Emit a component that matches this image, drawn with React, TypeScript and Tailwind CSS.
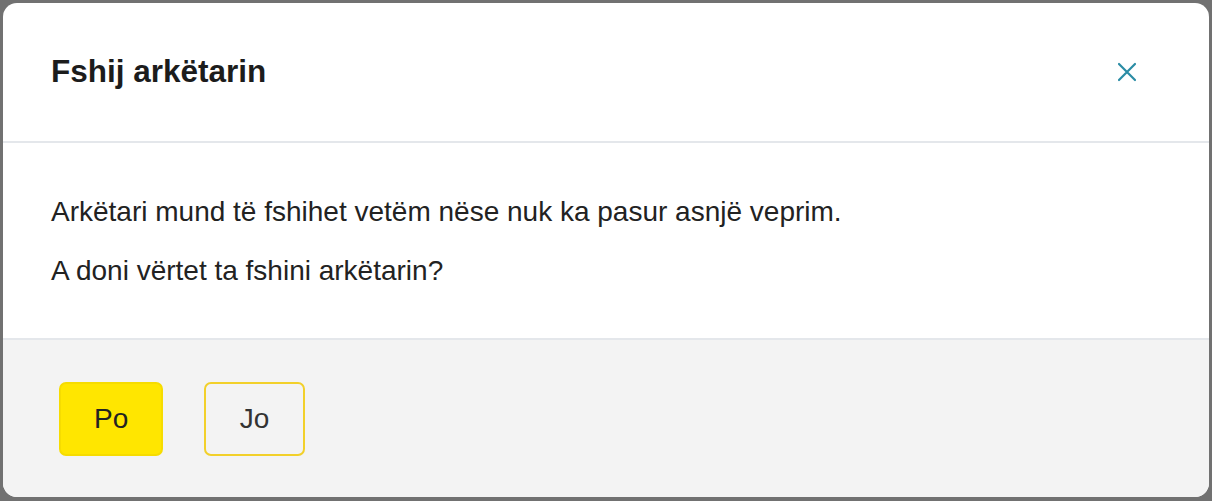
export default function App() {
  return (
    <div className="h-[501px] w-[1212px] bg-[#717171] p-[3px] font-['Liberation_Sans',Arial,sans-serif]">
      <div className="flex h-[494px] w-[1206px] flex-col overflow-hidden rounded-[14px] bg-white">
        <div className="flex h-[140px] shrink-0 items-center justify-between border-b-2 border-[#e4e7eb] pl-[48px] pr-[70px]">
          <h2 className="text-[31.5px] font-bold leading-none text-[#1c1c1c]">Fshij arkëtarin</h2>
          <button className="flex h-[24px] w-[24px] items-center justify-center text-[#2a8ca5]">
            <svg width="20" height="20" viewBox="0 0 20 20" fill="none" stroke="currentColor" strokeWidth="2.2" strokeLinecap="round">
              <path d="M2 2 18 18M18 2 2 18" />
            </svg>
          </button>
        </div>

        <div className="flex shrink-0 flex-col gap-[17px] px-[48px] pb-[46px] pt-[48px] text-[28px] leading-[42px] text-[#222]">
          <p>Arkëtari mund të fshihet vetëm nëse nuk ka pasur asnjë veprim.</p>
          <p>A doni vërtet ta fshini arkëtarin?</p>
        </div>

        <div className="flex flex-1 items-center gap-[41px] border-t-2 border-[#e4e7eb] bg-[#f3f3f3] pl-[56px]">
          <button className="h-[74px] rounded-[7px] border-2 border-[#f6dc00] bg-[#ffe600] px-[33px] text-[28px] text-[#222]">
            Po
          </button>
          <button className="h-[74px] rounded-[7px] border-2 border-[#f2d02a] px-[33.5px] text-[28px] text-[#333]">
            Jo
          </button>
        </div>
      </div>
    </div>
  );
}
